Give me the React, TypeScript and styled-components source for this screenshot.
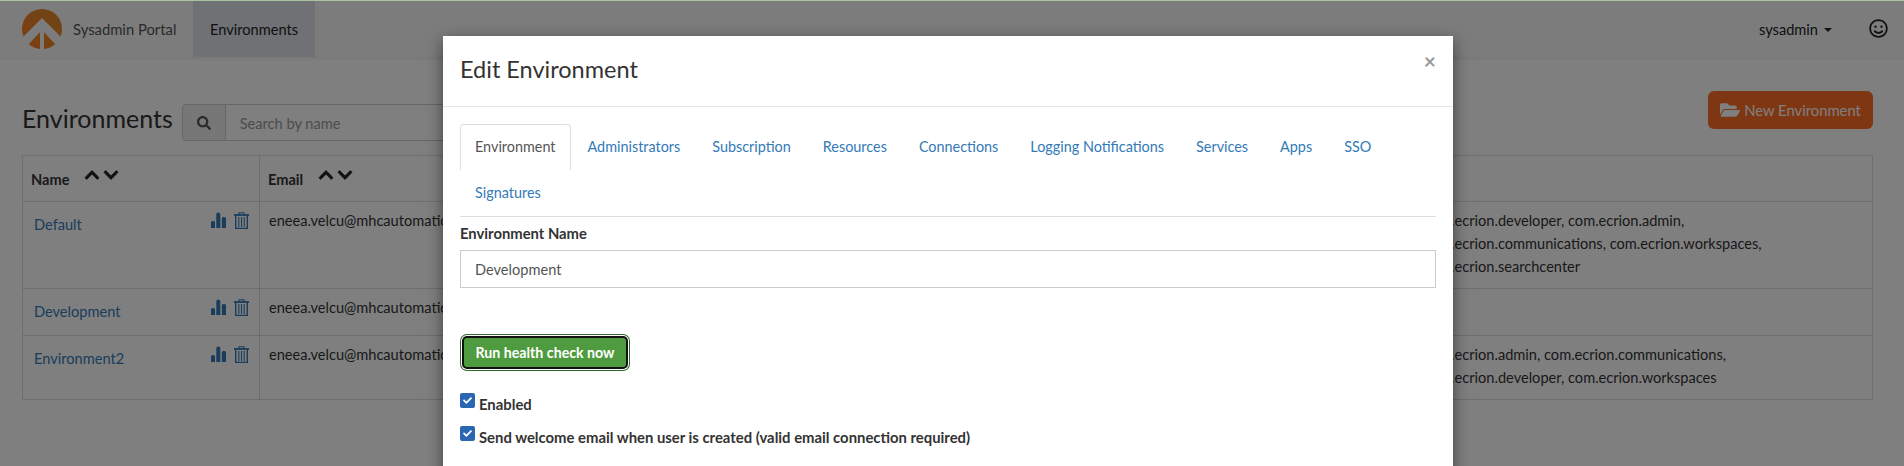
import React from "react";
import styled, { createGlobalStyle } from "styled-components";
import { FaSearch, FaChevronUp, FaChevronDown, FaFolderOpen, FaRegSmile, FaCheck } from "react-icons/fa";

const GlobalStyle = createGlobalStyle`
  html, body {
    margin: 0;
    padding: 0;
    height: 466px;
    overflow: hidden;
    background: #fff;
    font-family: "Lato", "Liberation Sans", sans-serif;
    font-size: 14.6px;
    color: #333;
  }
`;

const Page = styled.div`
  position: relative;
  width: 1904px;
  height: 466px;
  overflow: hidden;
`;

const Navbar = styled.div`
  display: flex;
  align-items: stretch;
  height: 56px;
  padding-left: 22px;
  background: #f8f8f8;
  border-top: 1px solid #a9c4a0;
  box-shadow: 0 1px 4px rgba(0, 0, 0, 0.1);
`;

const Brand = styled.div`
  display: flex;
  align-items: center;
  gap: 11px;
  width: 171px;
  color: #555;
  font-size: 14.8px;
`;

const NavTab = styled.div`
  display: flex;
  align-items: center;
  padding: 0 17px;
  background: #dfe3ea;
  color: #222;
`;

const NavRight = styled.div`
  display: flex;
  align-items: center;
  margin-left: auto;
  padding-right: 16px;
  color: #222;
`;

const Caret = styled.span`
  width: 0;
  height: 0;
  margin: 2px 37px 0 6px;
  border-left: 4px solid transparent;
  border-right: 4px solid transparent;
  border-top: 4px solid #222;
`;

const Smiley = styled(FaRegSmile)`
  margin-top: -2px;
`;

const Content = styled.div`
  padding: 47px 31px 0 22px;
`;

const TitleRow = styled.div`
  display: flex;
  align-items: flex-start;
  height: 37px;
  margin-bottom: 14px;
`;

const Title = styled.h1`
  margin: -4px 9px 0 0;
  font-size: 25px;
  line-height: 37px;
  font-weight: 400;
  color: #333;
`;

const SearchGroup = styled.div`
  display: flex;
  height: 37px;
`;

const SearchAddon = styled.div`
  display: flex;
  align-items: center;
  justify-content: center;
  width: 44px;
  background: #eee;
  border: 1px solid #ccc;
  border-radius: 4px 0 0 4px;
  color: #555;
  box-sizing: border-box;
`;

const SearchInput = styled.div`
  display: flex;
  align-items: center;
  width: 500px;
  padding: 1px 0 0 14px;
  background: #fff;
  border: 1px solid #ccc;
  border-left: none;
  color: #999;
  box-sizing: border-box;
`;

const NewButton = styled.div`
  display: flex;
  align-items: center;
  justify-content: center;
  gap: 4px;
  width: 165px;
  height: 38px;
  margin: -13px 0 0 auto;
  background: #ff6c25;
  border-radius: 6px;
  color: #fff;
  font-size: 14.8px;
  box-sizing: border-box;
`;

const Table = styled.table`
  width: 100%;
  border-collapse: collapse;
  table-layout: fixed;
`;

const Th = styled.th<{ $w?: number }>`
  height: 45px;
  padding: 0 8px;
  width: ${(p) => (p.$w ? `${p.$w}px` : "auto")};
  border: 1px solid #ddd;
  text-align: left;
  font-weight: 700;
  color: #333;
`;

const Td = styled.td<{ $h: number }>`
  height: ${(p) => p.$h}px;
  padding: 7px 9px;
  border: 1px solid #ddd;
  vertical-align: top;
  line-height: 23px;
  box-sizing: border-box;
  white-space: nowrap;
  overflow: hidden;
`;

const SortIcons = styled.span`
  display: inline-flex;
  gap: 3px;
  margin-left: 15px;
  font-size: 16px;
  color: #222;
  transform: translateY(-2px);

  svg {
    stroke: #222;
    stroke-width: 30px;
  }
`;

const NameCell = styled.div`
  display: flex;
  justify-content: space-between;
`;

const NameLink = styled.a`
  margin: 4px 0 0 2px;
  color: #337ab7;
`;

const RowIcons = styled.span`
  display: flex;
  align-items: flex-start;
  gap: 8px;
  margin: 3px 1px 0 0;
`;

const Overlay = styled.div`
  position: absolute;
  inset: 1px 0 0 0;
  background: rgba(0, 0, 0, 0.5);
`;

const Modal = styled.div`
  position: absolute;
  left: 443px;
  top: 36px;
  width: 1010px;
  height: 600px;
  background: #fff;
  box-shadow: 0 5px 15px rgba(0, 0, 0, 0.5);
`;

const ModalHeader = styled.div`
  display: flex;
  align-items: flex-start;
  justify-content: space-between;
  height: 70px;
  padding: 0 17px;
  border-bottom: 1px solid #e5e5e5;
`;

const ModalTitle = styled.h4`
  margin: 15px 0 0;
  font-size: 23.5px;
  font-weight: 400;
  line-height: 36px;
  color: #333;
`;

const Close = styled.span`
  margin-top: 14px;
  font-size: 21px;
  font-weight: 700;
  line-height: 1;
  color: #999;
`;

const ModalBody = styled.div`
  padding: 17px 17px 0;
`;

const Tabs = styled.div`
  display: flex;
  flex-wrap: wrap;
  border-bottom: 1px solid #ddd;
`;

const Tab = styled.div<{ $active?: boolean }>`
  height: 46px;
  padding: 0 14px;
  margin-right: 2px;
  font-size: 14.4px;
  line-height: 44px;
  box-sizing: border-box;
  color: ${(p) => (p.$active ? "#555" : "#337ab7")};
  border: 1px solid ${(p) => (p.$active ? "#ddd" : "transparent")};
  border-bottom: none;
  border-radius: 4px 4px 0 0;
`;

const Label = styled.label`
  display: block;
  margin: 6px 0 7px;
  font-size: 14.8px;
  font-weight: 700;
  line-height: 20px;
`;

const NameInput = styled.div`
  display: flex;
  align-items: center;
  height: 38px;
  padding-left: 14px;
  border: 1px solid #ccc;
  color: #555;
  box-sizing: border-box;
`;

const HealthButton = styled.div`
  display: flex;
  align-items: center;
  justify-content: center;
  width: 166px;
  height: 33px;
  margin: 48px 0 24px 2px;
  background: #4f9c40;
  border-radius: 5px;
  border: 2px solid #111;
  box-sizing: border-box;
  box-shadow: 0 0 0 1px #fff, 0 0 0 2px #2f6b2a;
  color: #fff;
  font-size: 14.2px;
  font-weight: 700;
`;

const CheckRow = styled.div`
  display: flex;
  align-items: flex-start;
  height: 33px;
  font-size: 14.85px;
  font-weight: 700;
`;

const CheckBox = styled.span`
  display: flex;
  align-items: center;
  justify-content: center;
  width: 15px;
  height: 15px;
  margin-right: 4px;
  background: #2a66b2;
  border-radius: 2px;
  color: #fff;
  font-size: 9px;
`;

const CheckText = styled.span`
  margin-top: 2px;
`;

const TrailingRow = styled.div`
  margin-top: 3px;
  padding-left: 19px;
  font-size: 14.85px;
  font-weight: 700;
`;

const Logo = () => (
  <svg width="40" height="40" viewBox="0 0 40 40">
    <defs>
      <linearGradient id="logoFill" x1="0" y1="1" x2="1" y2="0">
        <stop offset="0" stopColor="#ff7f20" />
        <stop offset="1" stopColor="#d98a2c" />
      </linearGradient>
    </defs>
    <circle cx="20" cy="20" r="20" fill="url(#logoFill)" />
    <path d="M20 9 L41 30 L34 36 L20 21 L6 36 L-1 30 Z" fill="#f8f8f8" />
    <path d="M18 20 L18 41 L22 41 L22 20 Z" fill="#f8f8f8" />
  </svg>
);

const BarsIcon = () => (
  <svg width="15" height="16" viewBox="0 0 15 16" fill="#337ab7">
    <path d="M0 10.5 Q0 9 1.5 9 H2.5 Q4 9 4 10.5 V16 H0 Z" />
    <path d="M5.3 2 Q5.3 0.5 7.3 0.5 Q9.3 0.5 9.3 2 V16 H5.3 Z" />
    <path d="M10.8 6.5 Q10.8 5 12.3 5 H13.5 Q15 5 15 6.5 V16 H10.8 Z" />
  </svg>
);

const TrashIcon = () => (
  <svg width="15" height="17" viewBox="0 0 15 17" fill="none" stroke="#337ab7" strokeWidth="1.1">
    <path d="M0 3 H15" strokeWidth="1.8" />
    <path d="M5 2.5 V0.8 H10 V2.5" />
    <path d="M1.7 3.5 V16.4 H13.3 V3.5" strokeWidth="1.4" />
    <path d="M4.8 5 V15 M7.5 5 V15 M10.2 5 V15" />
  </svg>
);

const rows = [
  {
    name: "Default",
    h: 87,
    apps: ["com.ecrion.developer, com.ecrion.admin,", "com.ecrion.communications, com.ecrion.workspaces,", "com.ecrion.searchcenter"],
  },
  { name: "Development", h: 47, apps: [] },
  {
    name: "Environment2",
    h: 64,
    apps: ["com.ecrion.admin, com.ecrion.communications,", "com.ecrion.developer, com.ecrion.workspaces"],
  },
];

const tabs = [
  "Administrators",
  "Subscription",
  "Resources",
  "Connections",
  "Logging Notifications",
  "Services",
  "Apps",
  "SSO",
];

export default function App() {
  return (
    <Page>
      <GlobalStyle />
      <Navbar>
        <Brand>
          <Logo />
          Sysadmin Portal
        </Brand>
        <NavTab>Environments</NavTab>
        <NavRight>
          sysadmin
          <Caret />
          <Smiley size={19} />
        </NavRight>
      </Navbar>
      <Content>
        <TitleRow>
          <Title>Environments</Title>
          <SearchGroup>
            <SearchAddon>
              <FaSearch size={14} />
            </SearchAddon>
            <SearchInput>Search by name</SearchInput>
          </SearchGroup>
          <NewButton>
            <FaFolderOpen size={20} />
            New Environment
          </NewButton>
        </TitleRow>
        <Table>
          <thead>
            <tr>
              <Th $w={220}>
                Name
                <SortIcons>
                  <FaChevronUp />
                  <FaChevronDown />
                </SortIcons>
              </Th>
              <Th $w={1138}>
                Email
                <SortIcons>
                  <FaChevronUp />
                  <FaChevronDown />
                </SortIcons>
              </Th>
              <Th />
            </tr>
          </thead>
          <tbody>
            {rows.map((row) => (
              <tr key={row.name}>
                <Td $h={row.h}>
                  <NameCell>
                    <NameLink>{row.name}</NameLink>
                    <RowIcons>
                      <BarsIcon />
                      <TrashIcon />
                    </RowIcons>
                  </NameCell>
                </Td>
                <Td $h={row.h}>eneea.velcu@mhcautomation.com</Td>
                <Td $h={row.h}>
                  {row.apps.map((line) => (
                    <div key={line}>{line}</div>
                  ))}
                </Td>
              </tr>
            ))}
          </tbody>
        </Table>
      </Content>
      <Overlay />
      <Modal>
        <ModalHeader>
          <ModalTitle>Edit Environment</ModalTitle>
          <Close>×</Close>
        </ModalHeader>
        <ModalBody>
          <Tabs>
            <Tab $active>Environment</Tab>
            {tabs.map((t) => (
              <Tab key={t}>{t}</Tab>
            ))}
            <Tab>Signatures</Tab>
          </Tabs>
          <Label>Environment Name</Label>
          <NameInput>Development</NameInput>
          <HealthButton>Run health check now</HealthButton>
          <CheckRow>
            <CheckBox>
              <FaCheck />
            </CheckBox>
            <CheckText>Enabled</CheckText>
          </CheckRow>
          <CheckRow>
            <CheckBox>
              <FaCheck />
            </CheckBox>
            <CheckText>Send welcome email when user is created (valid email connection required)</CheckText>
          </CheckRow>
          <TrailingRow>Send notifications to administrators</TrailingRow>
        </ModalBody>
      </Modal>
    </Page>
  );
}
